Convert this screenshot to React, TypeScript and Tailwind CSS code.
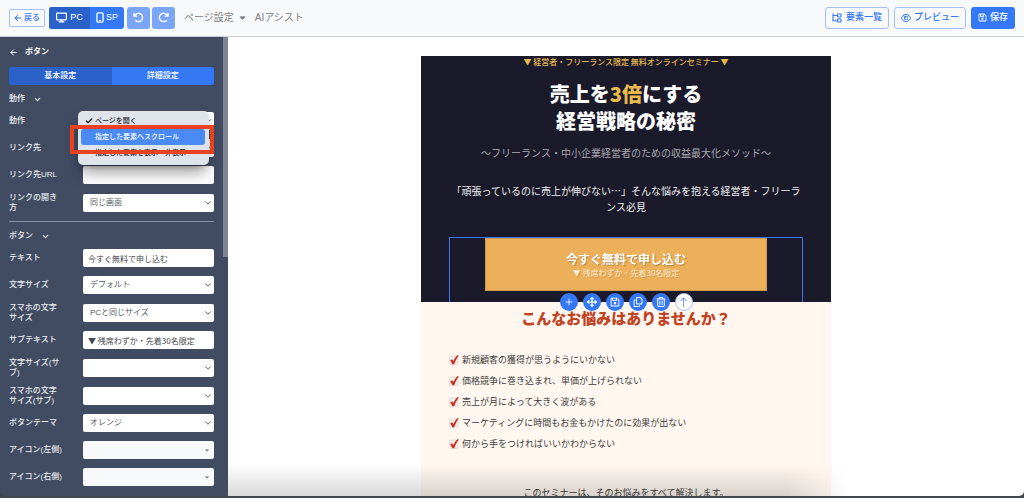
import React from "react";
import { FaArrowLeft, FaArrowRotateLeft, FaArrowRotateRight, FaArrowsUpDownLeftRight, FaCaretDown, FaDisplay, FaRegCopy, FaRegEye, FaRegFloppyDisk, FaRegTrashCan } from "react-icons/fa6";
import { BsArrowUp } from "react-icons/bs";
import { LuArrowLeft, LuCheck, LuChevronDown, LuPlus } from "react-icons/lu";

function TreeIcon() {
  return (
    <svg viewBox="0 0 20 20" className="size-[10px]" fill="none" stroke="currentColor" strokeWidth="2.2">
      <path d="M2 1v14.500h8M2 5h8" />
      <rect x="11" y="2" width="7" height="6" rx="1" />
      <rect x="11" y="12" width="7" height="6" rx="1" />
    </svg>
  );
}

function PhoneIcon() {
  return (
    <svg viewBox="0 0 14 20" className="h-[11px] w-[8px]" fill="none" stroke="currentColor" strokeWidth="2.4">
      <rect x="1.500" y="1.500" width="11" height="17" rx="2" />
      <path d="M5 15.500h4" strokeWidth="1.800" />
    </svg>
  );
}

function CheckMark() {
  return (
    <svg viewBox="0 0 20 20" className="size-[10px] shrink-0">
      <rect x="1" y="2" width="17" height="17" rx="1.500" fill="#f3eeea" stroke="#cfc9c5" />
      <path d="M2.500 10.500 6.500 8.500l2 4C11 7.500 13.500 3.500 17.500 0l2 1.500C15.500 6 12.500 12 10.500 18.500H7z" fill="#d3261c" />
    </svg>
  );
}

function Header() {
  return (
    <header className="flex h-[37px] shrink-0 items-center justify-between border-b border-[#ced2d8] bg-[#f8f9fb] px-[9px] pb-px">
      <div className="flex items-center">
        <button className="flex h-[18px] items-center gap-[2px] rounded-[2px] border border-[#a3c1f8] px-[4px] text-[8px] font-medium text-[#3478f6]">
          <FaArrowLeft className="size-[8px]" />
          戻る
        </button>
        <div className="ml-[4px] flex h-[22px] overflow-hidden rounded-[3px] bg-[#3478f6] text-[9px] text-white">
          <button className="flex w-[41px] items-center justify-center gap-[3px] bg-[#2a62c9]">
            <FaDisplay className="size-[11px]" />
            PC
          </button>
          <button className="flex w-[34px] items-center justify-center gap-[2px]">
            <PhoneIcon />
            SP
          </button>
        </div>
        <button aria-label="元に戻す" className="ml-[3px] flex h-[22px] w-[23px] items-center justify-center rounded-[3px] bg-[#7ba6f8] text-white">
          <FaArrowRotateLeft className="size-[11px]" />
        </button>
        <button aria-label="やり直す" className="ml-[2px] flex h-[22px] w-[23px] items-center justify-center rounded-[3px] bg-[#7ba6f8] text-white">
          <FaArrowRotateRight className="size-[11px]" />
        </button>
        <button className="ml-[9px] flex items-center gap-[4px] text-[10px] text-[#7c7e81]">
          ページ設定
          <FaCaretDown className="size-[9px]" />
        </button>
        <button className="ml-[8px] text-[10px] text-[#7c7e81]">AIアシスト</button>
      </div>
      <div className="flex items-center gap-[5px] text-[9px] font-medium">
        <button className="flex h-[22px] items-center gap-[4px] rounded-[3px] border border-[#a3c1f8] px-[6px] text-[#3478f6]">
          <TreeIcon />
          要素一覧
        </button>
        <button className="flex h-[22px] items-center gap-[3px] rounded-[3px] border border-[#a3c1f8] px-[6px] text-[#3478f6]">
          <FaRegEye className="size-[10px]" />
          プレビュー
        </button>
        <button className="flex h-[22px] items-center gap-[3px] rounded-[3px] bg-[#3478f6] px-[7px] text-white">
          <FaRegFloppyDisk className="size-[9px]" />
          保存
        </button>
      </div>
    </header>
  );
}

function Row({ id, label, tall, children }: { id: string; label: string; tall?: boolean; children: React.ReactNode }) {
  return (
    <div className={tall ? "flex h-[19px] items-center" : "flex h-[18px] items-center"}>
      <div className="w-[74px] shrink-0">
        <label htmlFor={id} className="block w-[55px] text-[8px] leading-[10px] font-medium text-[#eceef1]">
          {label}
        </label>
      </div>
      <div className="relative min-w-0 flex-1">{children}</div>
    </div>
  );
}

function TextRow({ id, label, value }: { id: string; label: string; value: string }) {
  return (
    <Row id={id} label={label}>
      <input
        id={id}
        defaultValue={value}
        className="block h-[18px] w-full rounded-[2px] bg-white px-[5px] font-['Noto_Sans_CJK_JP',sans-serif] text-[8px] text-[#43474d]"
      />
    </Row>
  );
}

function SelectRow({ id, label, value, tall, muted, children }: { id: string; label: string; value: string; tall?: boolean; muted?: boolean; children?: React.ReactNode }) {
  return (
    <Row id={id} label={label} tall={tall}>
      <select
        id={id}
        defaultValue={value}
        className={
          muted
            ? "block h-[18px] w-full appearance-none rounded-[2px] bg-[#f8f9fb] px-[7px] text-[8px] text-[#55595f]"
            : "block h-[18px] w-full appearance-none rounded-[2px] bg-white px-[7px] text-[8px] text-[#55595f]"
        }
      >
        <option value={value}>{value}</option>
      </select>
      {muted ? (
        <FaCaretDown className="pointer-events-none absolute top-[6px] right-[4px] size-[6px] text-[#8b8f95]" />
      ) : (
        <LuChevronDown className="pointer-events-none absolute top-[4px] right-px size-[10px] text-[#43474d]" />
      )}
      {children}
    </Row>
  );
}

function ActionMenu() {
  return (
    <>
      <ul role="listbox" aria-label="動作" className="absolute -top-px -left-[5px] z-10 h-[54px] w-[131px] rounded-[5px] bg-[#dfe3ea] pt-[2px] pr-[4px] pl-[3px] text-[7px] font-medium text-[#22262c] shadow-lg shadow-black/40">
        <li role="option" aria-selected="true" className="flex h-4 items-center pl-[4px]">
          <LuCheck className="mr-[2px] size-[8px] stroke-[4]" />
          ページを開く
        </li>
        <li role="option" aria-selected="false" className="flex h-4 items-center rounded-[3px] bg-[#4a8af4] pl-[14px] text-white">
          指定した要素へスクロール
        </li>
        <li role="option" aria-selected="false" className="flex h-4 items-center pl-[14px]">
          指定した要素を表示・非表示
        </li>
      </ul>
      <div className="pointer-events-none absolute top-[13px] -left-[13px] z-20 h-[29px] w-[144px] border-4 border-[#e8411f]" />
    </>
  );
}

function SectionTitle({ children }: { children: React.ReactNode }) {
  return (
    <button className="flex h-3 items-center gap-[8px] text-[8px] font-medium text-[#eceef1]">
      {children}
      <LuChevronDown className="size-[9px] stroke-[3]" />
    </button>
  );
}

function Sidebar() {
  return (
    <aside className="relative w-[228px] shrink-0 overflow-hidden rounded-bl-[5px] bg-[#414c63] pt-[7px] pr-[14px] pl-[9px]">
      <div className="absolute top-0 right-0 h-[220px] w-[5px] bg-[#7e8694]" />
      <div className="flex h-4 items-center gap-[7px] text-white">
        <button aria-label="戻る">
          <LuArrowLeft className="size-[9px] stroke-[2.500]" />
        </button>
        <h2 className="text-[8px] font-bold">ボタン</h2>
      </div>
      <div className="mt-[7px] flex h-[18px] overflow-hidden rounded-[2px] text-[8px] font-medium text-white">
        <button className="flex-1 bg-[#2a62c9]">基本設定</button>
        <button className="flex-1 bg-[#3478f6]">詳細設定</button>
      </div>
      <div className="mt-[8px]">
        <SectionTitle>動作</SectionTitle>
      </div>
      <div className="mt-[7px] flex flex-col gap-[9px]">
        <SelectRow id="action" label="動作" value="ページを開く">
          <ActionMenu />
        </SelectRow>
        <SelectRow id="target" label="リンク先" value="" />
        <TextRow id="url" label="リンク先URL" value="" />
        <SelectRow id="open" label="リンクの開き方" value="同じ画面" tall />
      </div>
      <hr className="mt-[9px] border-[#8a92a0]" />
      <div className="mt-[8px]">
        <SectionTitle>ボタン</SectionTitle>
      </div>
      <div className="mt-[7px] flex flex-col gap-[9px]">
        <TextRow id="text" label="テキスト" value="今すぐ無料で申し込む" />
        <SelectRow id="size" label="文字サイズ" value="デフォルト" />
        <SelectRow id="sp-size" label="スマホの文字サイズ" value="PCと同じサイズ" tall />
        <TextRow id="sub" label="サブテキスト" value="▼ 残席わずか・先着30名限定" />
        <SelectRow id="sub-size" label="文字サイズ(サブ)" value="" tall />
        <SelectRow id="sp-sub-size" label="スマホの文字サイズ(サブ)" value="" tall />
        <SelectRow id="theme" label="ボタンテーマ" value="オレンジ" />
        <SelectRow id="icon-left" label="アイコン(左側)" value="" muted />
        <SelectRow id="icon-right" label="アイコン(右側)" value="" muted />
      </div>
    </aside>
  );
}

const tools = [
  { name: "追加", Icon: LuPlus },
  { name: "移動", Icon: FaArrowsUpDownLeftRight },
  { name: "保存", Icon: FaRegFloppyDisk },
  { name: "複製", Icon: FaRegCopy },
  { name: "削除", Icon: FaRegTrashCan },
];

const worries = [
  "新規顧客の獲得が思うようにいかない",
  "価格競争に巻き込まれ、単価が上げられない",
  "売上が月によって大きく波がある",
  "マーケティングに時間もお金もかけたのに効果が出ない",
  "何から手をつければいいかわからない",
];

function Preview() {
  return (
    <main className="relative min-w-0 flex-1 overflow-hidden rounded-br-[5px] bg-white pt-[19px] font-['Noto_Sans_CJK_JP',sans-serif]">
      <article className="mx-auto w-full max-w-[410px] bg-[#fff7f0] text-center">
        <section className="relative bg-[#1a1a2b] px-[28px]">
          <p className="text-[8px] leading-[12px] font-medium text-[#e5b94e]">▼ 経営者・フリーランス限定 無料オンラインセミナー ▼</p>
          <h1 className="mt-[12px] text-[20px] leading-[27px] font-black text-white">
            売上を<span className="text-[#e8bb4f]">3倍</span>にする
            <br />
            経営戦略の秘密
          </h1>
          <p className="mt-[11px] text-[10px] leading-[16px] text-[#a9a9af]">〜フリーランス・中小企業経営者のための収益最大化メソッド〜</p>
          <p className="mt-[22px] text-[10px] leading-[16px] text-[#f0f0f2]">
            「頑張っているのに売上が伸びない…」そんな悩みを抱える経営者・フリーランス必見
          </p>
          <div className="mt-[22px] flex h-[65px] justify-center border border-b-0 border-[#3478f6] px-[35px]">
            <button className="flex h-[53px] w-full flex-col items-center justify-center border border-[#c99a50] bg-[#ebb059] text-white">
              <span className="text-[12px] leading-[16px] font-bold [text-shadow:1px_1px_1px_rgba(0,0,0,0.25)]">今すぐ無料で申し込む</span>
              <span className="text-[8px] leading-[12px] text-[#fbe9cf] [text-shadow:1px_1px_1px_rgba(0,0,0,0.15)]">▼ 残席わずか・先着30名限定</span>
            </button>
          </div>
          <div className="absolute inset-x-0 -bottom-[9px] flex justify-center gap-[5px]">
            {tools.map(({ name, Icon }) => (
              <button key={name} aria-label={name} className="flex size-[18px] items-center justify-center rounded-full bg-[#3478f6] text-white">
                <Icon className="size-[10px]" />
              </button>
            ))}
            <button aria-label="上へ" className="flex size-[18px] items-center justify-center rounded-full border border-[#a3c1f8] bg-white text-[#3478f6]">
              <BsArrowUp className="size-[11px]" />
            </button>
          </div>
        </section>
        <section className="px-[28px] pt-[6px]">
          <h2 className="text-[15px] leading-[20px] font-black text-[#c04422]">こんなお悩みはありませんか？</h2>
          <ul className="mt-[24px] flex flex-col gap-[5px] text-left text-[9px] leading-[16px] text-[#3d3d3d]">
            {worries.map((worry) => (
              <li key={worry} className="flex items-center gap-[3px]">
                <CheckMark />
                {worry}
              </li>
            ))}
          </ul>
          <p className="mt-[33px] text-[9px] leading-[16px] text-[#3d3d3d]">このセミナーは、そのお悩みをすべて解決します。</p>
        </section>
      </article>
      <div className="pointer-events-none absolute right-[22%] bottom-0 left-0 h-8 bg-linear-to-b from-transparent to-black/15 mask-r-from-90%" />
    </main>
  );
}

export default function App() {
  return (
    <div className="flex h-screen flex-col overflow-hidden bg-[#414850] pb-[2px] font-['Liberation_Sans','Noto_Sans_CJK_JP',sans-serif]">
      <Header />
      <div className="flex min-h-0 flex-1">
        <Sidebar />
        <Preview />
      </div>
    </div>
  );
}
